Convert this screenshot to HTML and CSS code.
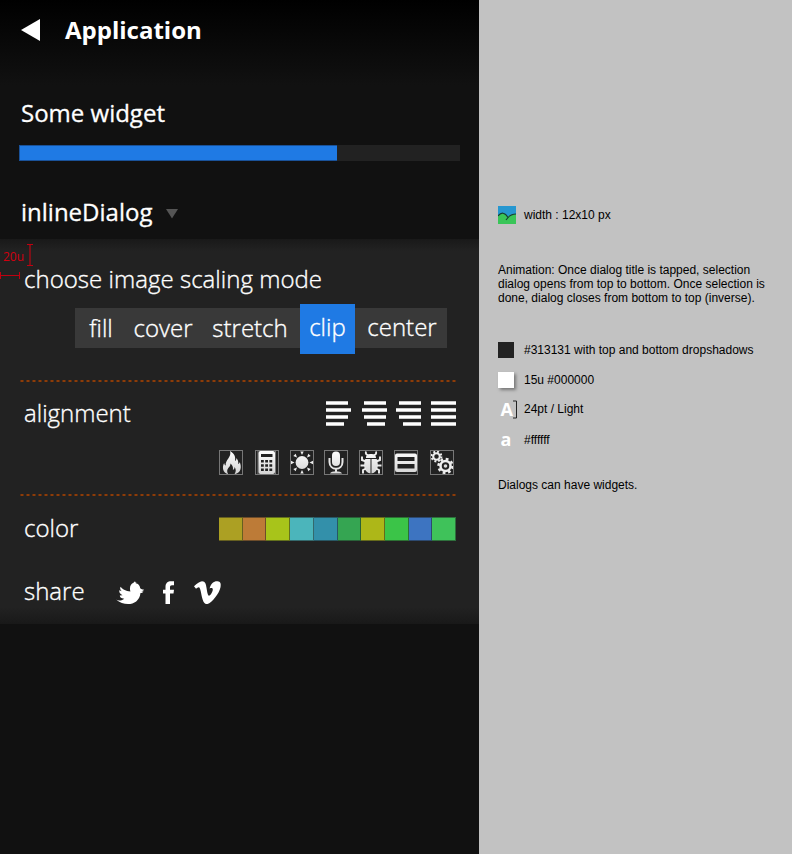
FILE: index.html
```html
<!DOCTYPE html>
<html lang="en">
<head>
<meta charset="utf-8">
<title>Application</title>
<link rel="stylesheet" href="styles.css">
</head>
<body>
<main class="phone">
  <header class="header">
    <svg class="back" width="19" height="22" viewBox="0 0 19 22"><path d="M0 11 19 0V22Z" fill="#fff"/></svg>
    <h1 class="title">Application</h1>
  </header>
  <section class="widget">
    <h2 class="heading widget-title">Some widget</h2>
    <div class="progress"><div class="progress-fill"></div></div>
  </section>
  <div class="trigger">
    <h2 class="heading dialog-title">inlineDialog</h2>
    <svg class="caret" width="12" height="10" viewBox="0 0 12 10"><path d="M0 0H12L6 9.5Z" fill="#555"/></svg>
  </div>
  <section class="dialog">
    <div class="measure">
      <span class="measure-text">20u</span>
      <svg width="36" height="40" viewBox="0 0 36 40" fill="none"><path d="M27 5.500h6M27 26.500h6M0 36.500h20M.5 33v7M19.500 33v7" stroke="#c00010"/><path d="M30 6v20" stroke="#7c1118" stroke-width="2"/></svg>
    </div>
    <p class="label choose">choose image scaling mode</p>
    <div class="modes">
      <span class="mode fill">fill</span><span class="mode cover">cover</span><span class="mode stretch">stretch</span><span class="mode selected">clip</span><span class="mode center">center</span>
    </div>
    <div class="rule"></div>
    <div class="row alignment">
      <span class="label">alignment</span>
      <svg width="130" height="26" viewBox="0 0 130 26" fill="#fff"><path d="M0 .3h22v3.500H0zM0 7.300h25v3.500H0zM0 14.300h22v3.500H0zM0 21.300h18v3.500H0zM38 .3h22v3.500H38zM36 7.300h25v3.500H36zM38 14.300h22v3.500H38zM41 21.300h18v3.500H41zM73 .3h22v3.500H73zM70 7.300h25v3.500H70zM73 14.300h22v3.500H73zM77 21.300h18v3.500H77zM105 .3h25v3.500h-25zM105 7.300h25v3.500h-25zM105 14.300h25v3.500h-25zM105 21.300h25v3.500h-25z"/></svg>
    </div>
    <div class="icons">
      <svg class="icon" viewBox="0 0 24 25">
        <defs><linearGradient id="g" x1="0" y1="0" x2="0" y2="25" gradientUnits="userSpaceOnUse"><stop stop-color="#fff"/><stop offset="1" stop-color="#d2d2d2"/></linearGradient></defs>
        <path fill="url(#g)" d="M11 1C16.500 4 16.500 8 16 11c1-.5 1.500-1.500 1.200-3 2 2 2.300 4 2 6 .9-.2 1.300-1 1.500-2 2.200 5 1.400 11-5.200 12.200 2-3 1.400-5.200 0-7.200.2 2-.8 2.500-1.600 3 .5-3-.5-5-2.500-6.500.5 3-3.200 4.500-3.200 7.500 0 1.300.5 2.300 1 3.200-5.400-1-6.400-7.200-4-11.200.2 1.500.8 2.300 1.500 2.500C6 10 13 7 11 1Z"/></svg>
      <svg class="icon second" viewBox="0 0 24 25"><path d="M3 0v25M20.500 0v25" stroke="#777"/><rect x="3.500" y="1" width="16.500" height="23" rx="2" fill="url(#g)"/><g fill="#222"><rect x="6" y="4" width="11.500" height="3"/><path d="M6 10h2.800v2.500h-2.800zm4.200 0h2.800v2.500h-2.800zm4.200 0h2.800v2.500h-2.800zM6 14.300h2.800v2.500h-2.800zm4.200 0h2.800v2.500h-2.800zm4.200 0h2.800v2.500h-2.800zM6 18.600h2.800v2.500h-2.800zm4.200 0h2.800v2.500h-2.800zm4.200 0h2.800v2.500h-2.800z"/></g></svg>
      <svg class="icon" viewBox="0 0 24 25"><circle cx="12" cy="12.500" r="6.400" fill="url(#g)"/><path fill="#eee" d="M10.300 1.500h3.400L12 5zM10.300 23.500h3.400L12 20zM1 10.800v3.400l3.500-1.700zM23 10.800v3.400l-3.500-1.700zM3.300 6.100l2.400-2.400 1.300 3.800zM20.700 6.100l-2.400-2.400L17 7.500zM3.300 18.900l2.400 2.400L7 17.500zM20.700 18.900l-2.400 2.400-1.300-3.800z"/></svg>
      <svg class="icon fourth" viewBox="0 0 24 25"><rect x="8" y="1.500" width="8" height="14.500" rx="4" fill="url(#g)"/><path d="M5.500 8v4c0 9 13 9 13 0V8M12 18v4" fill="none" stroke="#e6e6e6" stroke-width="2"/><path d="M6 23.500c1-3 11-3 12 0z" fill="#ddd"/></svg>
      <svg class="icon" viewBox="0 0 24 25"><path fill="url(#g)" d="M7 8C7 5 9 4 12 4s5 1 5 4zM6.300 9H11.500V23.500C4 22 4.500 14 6.300 9ZM12.500 9h5.200c1.800 5 2.300 13-5.200 14.500Z"/><path d="M9.500 5C7 5 6.500 3.500 7 1.500M14.500 5C17 5 17.500 3.500 17 1.500M7 11.500 3 10V6.500M6 15.500H1.500M7 18.500l-3 1.500V23.500M17 11.500 21 10V6.500M18 15.500h4.500M17 18.500l3 1.500V23.500" fill="none" stroke="#eee" stroke-width="1.900"/></svg>
      <svg class="icon" viewBox="0 0 24 25"><path fill="url(#g)" fill-rule="evenodd" d="M3 3.500h18q2 0 2 2v14.500q0 2-2 2H3q-2 0-2-2V5.500q0-2 2-2ZM3.500 7v4h17V7ZM3.500 14v4.500h17V14Z"/></svg>
      <svg class="icon last" viewBox="0 0 24 25" fill="none" stroke="#eee"><circle cx="6.500" cy="6.500" r="3.300" stroke-width="2.100"/><circle cx="6.500" cy="6.500" r="4.900" stroke-width="2" stroke-dasharray="1.900 1.950"/><circle cx="15.500" cy="16" r="5" stroke-width="2.500"/><circle cx="15.500" cy="16" r="7" stroke-width="2.500" stroke-dasharray="2.750 2.750"/><circle cx="15.500" cy="16" r="1.800" fill="#ddd" stroke="none"/></svg>
    </div>
    <div class="rule"></div>
    <div class="row color-row">
      <span class="label">color</span>
      <div class="swatches"><i class="swatch olive"></i><i class="swatch copper"></i><i class="swatch lime"></i><i class="swatch aqua"></i><i class="swatch teal"></i><i class="swatch forest"></i><i class="swatch mustard"></i><i class="swatch green"></i><i class="swatch blue"></i><i class="swatch mint"></i></div>
    </div>
    <div class="share">
      <span class="label share-label">share</span>
      <svg class="social" width="106" height="24" viewBox="0 0 106 24" fill="#fff"><path d="M0 18.500c4 2 6 .7 8.200-.8C5 17.500 4 16.200 3.800 14.500l2.700-.3C3.900 13 3 11 3.300 9.300l2.500 1C4 8.500 3.800 7 4.700 5.800c2.500 3.400 5 4 9.700 4.700C13 5.500 15.200 2.500 17.300 2c.3-.8 1-1.300 2-1.700l-.4 1.200 1.600-.4-.8 1.200c2.500.2 4.400 2.700 4.500 5 .8.900 2.200 1.300 4 1.400-.8.900-1.700 1.300-3 1.300l2.300.7c-.9.900-1.800 1.200-3 1.200C23 24.500 9 26 0 18.500Z"/><path d="M49.500 23V12.500H47V8.700h2.500V6c0-4 2.300-5.700 5.500-5.700h3v4h-2c-1.500 0-2 .7-2 2v2.400h4l-.5 3.800H54V23Z"/><path d="M78 5.200C81 2.500 84 .3 86 .3c3.500 0 4 3.200 4.500 6.500.7 4.300 1.300 8 2.500 8 1.300 0 3.700-4 3.800-6 .2-2-1.300-2-3.200-1.400C95 2.300 98 0 101.500.3c3 .2 3.700 2.500 3 6-1 5.700-8.500 15.700-13 16.700-3 .6-4.300-2.300-5.300-6-.9-3.500-1.700-10-3.200-10.700-.7-.3-2 .6-3 1.400Z"/></svg>
    </div>
  </section>
</main>
<aside class="notes">
  <div class="note size-note"><svg class="key" width="18" height="18" viewBox="0 0 18 18"><path fill="#2697d0" d="M0 0h18v18H0z"/><path fill="#39c558" d="M0 10C3 6 7 6 9.500 11 12 8.500 14 8 18 8v10H0Z"/><path d="M0 10C3 6 7 6 10 11.500M8 14c3-4.500 6-6 10-6" fill="none" stroke="#173b35" stroke-width="1.100"/></svg><span>width : 12x10 px</span></div>
  <p class="paragraph">Animation: Once dialog title is tapped, selection<br>dialog opens from top to bottom. Once selection is<br>done, dialog closes from bottom to top (inverse).</p>
  <div class="note"><i class="key dark"></i><span>#313131 with top and bottom dropshadows</span></div>
  <div class="note"><i class="key white"></i><span>15u #000000</span></div>
  <div class="note point-note"><span class="key glyph">A<svg width="5" height="19" viewBox="0 0 5 19"><path d="M0 1h3.500v17H0" fill="none" stroke="#222"/></svg></span><span>24pt / Light</span></div>
  <div class="note color-note"><span class="key glyph lower">a</span><span>#ffffff</span></div>
  <p class="closing">Dialogs can have widgets.</p>
</aside>
</body>
</html>
```
FILE: styles.css
```css
* { box-sizing: border-box; }
body { margin: 0; display: flex; width: 792px; height: 854px; overflow: hidden; background: #c2c2c2; }
h1, h2, p { margin: 0; font-weight: 400; }
svg { display: block; flex: none; }

.phone { width: 479px; height: 854px; flex: none; background: linear-gradient(#000, #111 85px); color: #fff; font: 400 24px/32px "Open Sans", sans-serif; white-space: nowrap; }
.header { display: flex; align-items: center; height: 60px; padding-left: 21px; gap: 25px; }
.title { font-size: 24px; font-weight: 700; }
.widget { padding: 37px 19px 0; }
.heading { font-size: 24px; line-height: 32px; -webkit-text-stroke: .3px #fff; }
.widget-title { padding-left: 2px; }
.progress { width: 441px; height: 16px; margin-top: 16px; background: #222; }
.progress-fill { width: 318px; height: 16px; background: #1f7ae4; border: solid #1a5299; border-width: 1px 0 1px 1px; }
.trigger { display: flex; align-items: center; gap: 14px; height: 32px; margin: 35px 0 11px; padding-left: 21px; }
.caret { margin-top: 3px; }

.dialog { position: relative; height: 385px; padding: 24px 0 0; background: linear-gradient(#191919, #222 12px, #222 368px, #191919); }
.label { font-weight: 300; -webkit-text-stroke: .35px #fff; }
.choose { padding-left: 24px; letter-spacing: .03px; }
.measure { position: absolute; left: 0; top: 0; width: 36px; height: 40px; }
.measure-text { position: absolute; left: 3px; top: 9px; color: #d00010; font-size: 12px; line-height: 18px; }
.modes { display: flex; width: 372px; height: 40px; margin: 13px 0 0 75px; background: #393939; }
.mode { flex: none; height: 40px; line-height: 40px; text-align: center; font-weight: 300; -webkit-text-stroke: .35px #fff; }
.fill { width: 52px; }
.cover { width: 72px; }
.stretch { width: 101px; padding-left: 1px; }
.center { width: 92px; padding-left: 2px; line-height: 38px; }
.selected { width: 55px; height: 50px; margin-top: -4px; line-height: 46px; background: #1f7ae4; }
.rule { height: 2px; margin: 32px 23px 0 20px; background: repeating-linear-gradient(90deg, #5a2d12 0 1px, #8c3c08 1px 3px, #5a2d12 3px 4px, #222 4px 6px); }
.row { display: flex; justify-content: space-between; align-items: center; padding: 0 23px 0 24px; }
.row .label { margin-top: -2px; }
.alignment { height: 32px; margin-top: 16px; }
.icons { display: flex; gap: 11px; padding-left: 219px; margin-top: 20px; }
.icon { width: 24px; height: 25px; outline: 1px solid #777; outline-offset: -1px; }
.second { margin-left: 1px; }
.fourth { margin-left: -1px; }
.last { margin-left: 1px; }
.icons + .rule { margin-top: 19px; }
.color-row { height: 32px; margin-top: 17px; }
.swatches { display: flex; width: 237px; height: 24px; }
.swatch { flex: 1; border: solid rgba(30, 30, 30, .5); border-width: 1px 1px 1px 0; }
.olive { background: #aca023; }
.copper { background: #bd7b37; }
.lime { background: #a8c41a; }
.aqua { background: #4bb5bb; }
.teal { background: #3390aa; }
.forest { background: #35a552; }
.mustard { background: #adb718; }
.green { background: #3bc448; }
.blue { background: #3d74c1; }
.mint { background: #3fc25a; }
.share { display: flex; align-items: center; height: 32px; margin-top: 31px; padding-left: 24px; }
.share-label { width: 92px; margin-top: -2px; }
.social { margin-top: 1px; }

.notes { padding: 205px 0 0 19px; color: #000; font: 12px/14px "Liberation Sans", sans-serif; white-space: nowrap; }
.note { display: flex; align-items: center; height: 30px; }
.size-note { height: 20px; }
.key { flex: none; width: 18px; margin-right: 8px; }
.paragraph { margin: 38px 0 30px; }
.dark { width: 16px; height: 16px; margin-right: 10px; background: #222; }
.white { width: 16px; height: 16px; margin-right: 10px; background: #fff; box-shadow: 2px 2px 3px #777; }
.glyph { display: flex; align-items: center; justify-content: flex-end; color: #fff; font: 700 18px/24px "Open Sans", sans-serif; width: 20px; margin-right: 6px; }
.point-note { height: 28px; }
.color-note { height: 34px; }
.lower { justify-content: center; padding-right: 4px; padding-bottom: 2px; }
.closing { margin-top: 21px; }
```
